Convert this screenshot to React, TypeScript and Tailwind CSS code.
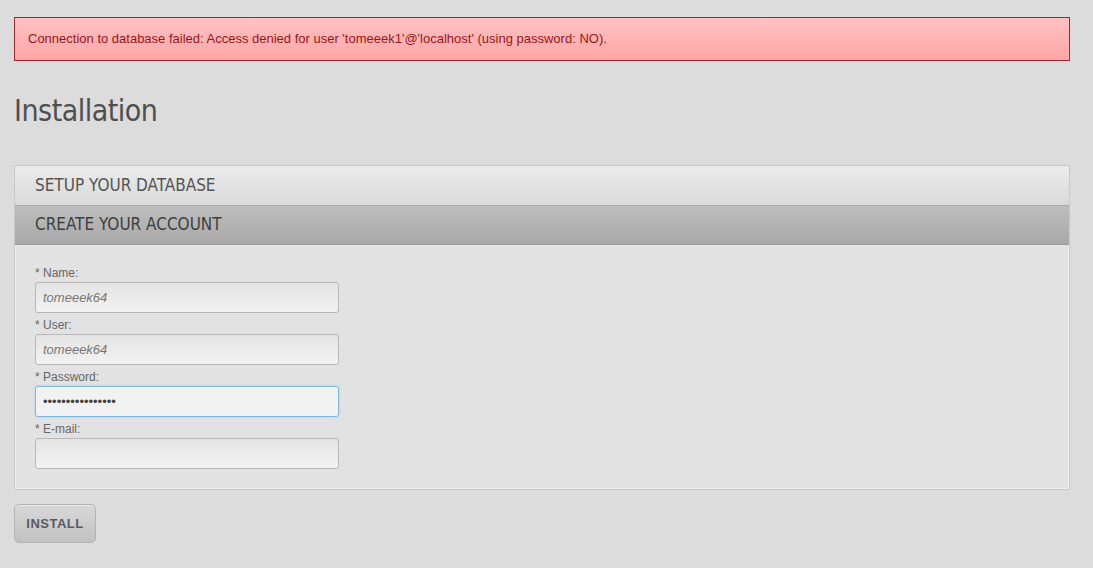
function Field({ label, value, type = 'text', focused = false }: { label: string; value?: string; type?: string; focused?: boolean }) {
  return (
    <div className="flex flex-col">
      <label className="mb-[2px] font-['Liberation_Sans',Arial,sans-serif] text-[12px] leading-[14px] text-[#666]">
        {label}
      </label>
      <input
        type={type}
        defaultValue={value}
        readOnly
        className={`h-[31px] w-[304px] rounded-[3px] border px-[7px] font-['Liberation_Sans',Arial,sans-serif] text-[13px] outline-none ${
          focused
            ? 'border-[#7fb6d8] bg-[#f2f2f2] text-[10px] text-[#444] shadow-[0_0_3px_#a9d2ea]'
            : 'border-[#b8b8b8] bg-gradient-to-b from-[#e4e4e4] to-[#f2f2f2] italic text-[#777]'
        }`}
      />
    </div>
  );
}

export default function App() {
  return (
    <div className="min-h-[568px] w-full bg-[#dcdcdc] pl-[14px] pr-[23px] pt-[17px]">
      <div className="flex h-[44px] items-center border border-[#a3262c] bg-gradient-to-b from-[#ffc2c2] to-[#ffa6a6] px-[13px] font-['Liberation_Sans',Arial,sans-serif] text-[13px] text-[#9c1418]">
        Connection to database failed: Access denied for user 'tomeeek1'@'localhost' (using password: NO).
      </div>

      <h1 className="mt-[30px] font-['DejaVu_Sans',sans-serif] text-[30px] leading-[40px] font-medium font-stretch-condensed text-[#4f4f4f] tracking-[-0.5px]">
        Installation
      </h1>

      <div className="mt-[34px] border border-[#c8c8c8] bg-[#e2e2e2]">
        <div className="flex h-[40px] items-center border-b border-[#a9a9a9] bg-gradient-to-b from-[#ececec] to-[#d9d9d9] px-[20px] font-['DejaVu_Sans',sans-serif] text-[17px] font-stretch-condensed text-[#555]">
          SETUP YOUR DATABASE
        </div>
        <div className="flex h-[39px] items-center border-b border-[#9a9a9a] bg-gradient-to-b from-[#bebebe] to-[#a8a8a8] px-[20px] font-['DejaVu_Sans',sans-serif] text-[17px] font-stretch-condensed text-[#3f3f3f]">
          CREATE YOUR ACCOUNT
        </div>
        <div className="flex flex-col gap-[5px] border-x border-b border-[#f0f0f0] px-[19px] pt-[21px] pb-[19px]">
          <Field label="* Name:" value="tomeeek64" />
          <Field label="* User:" value="tomeeek64" />
          <Field label="* Password:" value="tomeeek64tomeeek" type="password" focused />
          <Field label="* E-mail:" />
        </div>
      </div>

      <button className="mt-[14px] h-[39px] w-[82px] rounded-[5px] border border-[#b3b3b3] bg-gradient-to-b from-[#d8d8d8] to-[#c2c2c2] font-['Liberation_Sans',Arial,sans-serif] text-[13px] font-bold tracking-[0.5px] text-[#5a5a66] shadow-[inset_0_1px_0_#e8e8e8]">
        INSTALL
      </button>
    </div>
  );
}
